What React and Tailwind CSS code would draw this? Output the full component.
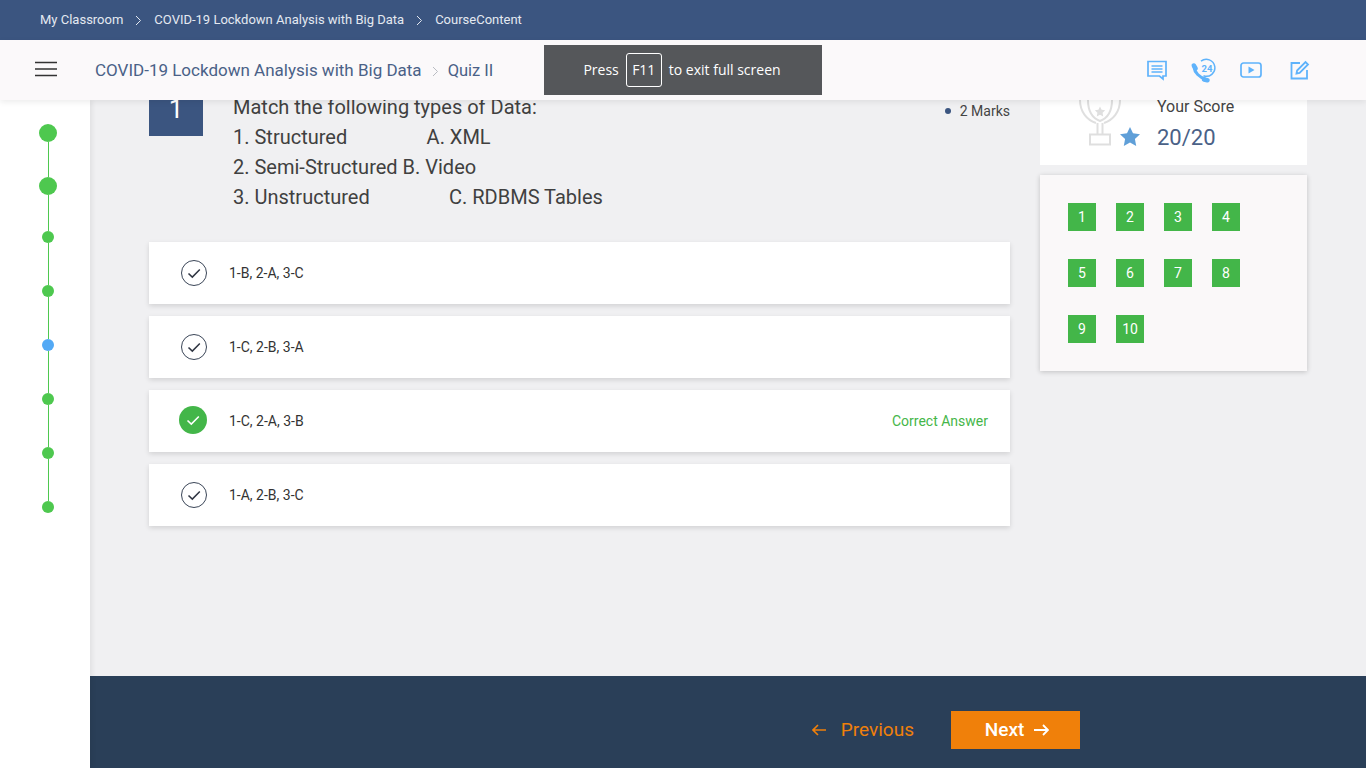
import React from "react";

const font = { fontFamily: "Roboto, sans-serif" };

function Dot({ big, blue }) {
  return (
    <div
      className={`shrink-0 rounded-full ${big ? "w-[18px] h-[18px]" : "w-3 h-3"} ${blue ? "bg-[#53a9f5]" : "bg-[#4ec84f]"}`}
    />
  );
}
function Seg({ h }) {
  return h === 35 ? (
    <div className="w-px h-[35px] bg-[#4ec84f]" />
  ) : h === 36 ? (
    <div className="w-px h-[36px] bg-[#4ec84f]" />
  ) : (
    <div className="w-px h-[42px] bg-[#4ec84f]" />
  );
}

function Check({ on }) {
  return on ? (
    <svg width="28" height="28" viewBox="0 0 28 28" className="shrink-0 -ml-[2px] -mt-[2px]">
      <circle cx="14" cy="14" r="14" fill="#43b649" />
      <path d="M8.5 14.5l3.8 3.6 7.5-7.6" fill="none" stroke="#fff" strokeWidth="1.6" />
    </svg>
  ) : (
    <svg width="26" height="26" viewBox="0 0 26 26" className="shrink-0">
      <circle cx="13" cy="13" r="12.5" fill="none" stroke="#3a4557" strokeWidth="1" />
      <path d="M7.5 13.5l3.8 3.6 7.5-7.6" fill="none" stroke="#2f3542" strokeWidth="1.5" />
    </svg>
  );
}

function Option({ text, correct }) {
  return (
    <div className="h-[62px] bg-white shadow-[0_2px_5px_rgba(0,0,0,0.13)] flex items-center pl-8 pr-[22px]">
      <div className="w-[26px] flex justify-center">
        <Check on={correct} />
      </div>
      <span className="ml-[22px] text-sm text-[#333]">{text}</span>
      {correct && <span className="ml-auto text-sm text-[#45b649]">Correct Answer</span>}
    </div>
  );
}

function Num({ n }) {
  return (
    <div className="w-7 h-7 bg-[#43b649] text-white text-sm font-normal flex items-center justify-center">{n}</div>
  );
}

const Chevron = ({ className }) => (
  <svg width="7" height="11" viewBox="0 0 7 11" className={className}>
    <path d="M1 1l4.5 4.5L1 10" fill="none" stroke="currentColor" strokeWidth="1" />
  </svg>
);

export default function App() {
  return (
    <div className="relative w-full h-screen overflow-hidden flex flex-col bg-white" style={font}>
      <div className="relative z-20 h-10 shrink-0 bg-[#3b5580] flex items-center pl-10 text-[13px] text-[#e4e9f1]">
        <span>My Classroom</span>
        <Chevron className="mx-3 text-[#e4e9f1]" />
        <span>COVID-19 Lockdown Analysis with Big Data</span>
        <Chevron className="mx-3 text-[#e4e9f1]" />
        <span>CourseContent</span>
      </div>

      <div className="relative z-20 h-[60px] shrink-0 bg-[#fbf9fa] shadow-[0_2px_6px_rgba(0,0,0,0.08)] flex items-center pl-[35px] pr-[56px]">
        <svg width="22" height="16" viewBox="0 0 22 16" stroke="#333" strokeWidth="1.5" className="shrink-0 -mt-[2px]">
          <path d="M0 1.5h22M0 8h22M0 14.5h22" />
        </svg>
        <span className="ml-[38px] pt-[2px] text-[17px] text-[#4a6187]">COVID-19 Lockdown Analysis with Big Data</span>
        <Chevron className="ml-[10px] mr-[9px] mt-[2px] text-[#b9bcc2]" />
        <span className="pt-[2px] text-[16.5px] text-[#4a6187]">Quiz II</span>

        <div className="ml-auto flex items-center text-[#5fb3fb]">
          <svg width="22" height="22" viewBox="0 0 22 22" fill="none" stroke="currentColor" strokeWidth="1.7" className="mr-[22px] -ml-[1px]">
            <path d="M2 2.5h18v14.5h-3v3l-3.5-3H2z" />
            <path d="M5.5 7h11M5.5 10h11M5.5 13h11" />
          </svg>
          <svg width="26" height="26" viewBox="0 0 26 26" className="mr-[24px]">
            <path d="M11 4.2A8.5 8.5 0 1 1 13.5 18.8" fill="none" stroke="currentColor" strokeWidth="1.5" />
            <path d="M4 10C4.5 15.5 9.5 20.5 15.5 22" fill="none" stroke="currentColor" strokeWidth="3" />
            <path d="M3.8 8.5L5.6 11.5M14 22.5L17.5 23.3" fill="none" stroke="currentColor" strokeWidth="4.5" strokeLinecap="round" />
            <text x="11.5" y="14.5" fontSize="9.5" fontWeight="700" fill="currentColor" fontFamily="Roboto, sans-serif">24</text>
          </svg>
          <svg width="22" height="16" viewBox="0 0 22 16" fill="none" className="mr-[28px]">
            <rect x="1" y="1" width="20" height="14" rx="2.5" stroke="currentColor" strokeWidth="1.7" />
            <path d="M8.5 4.5l6 3.5-6 3.5z" fill="currentColor" />
          </svg>
          <svg width="20" height="20" viewBox="0 0 20 20" fill="none" stroke="currentColor" strokeWidth="1.8">
            <path d="M10 3H1.5v15.5H17V10" />
            <path d="M6.5 13.5l.6-3L15.5 2l2.5 2.5-8.4 8.4z" />
          </svg>
        </div>
      </div>

      <div className="absolute z-30 left-[544px] top-[45px] w-[278px] h-[50px] pr-[2px] bg-[#55575a] flex items-center justify-center text-[14px] text-white" style={{ fontFamily: "'Open Sans', sans-serif" }}>
        <span className="-mt-[2px]">Press</span>
        <span className="ml-[7px] mr-[7px] w-9 h-[34px] border border-white rounded-[3px] flex items-center justify-center pb-[2px]">F11</span>
        <span className="-mt-[2px]">to exit full screen</span>
      </div>

      <div className="flex-1 min-h-0 flex">
        <aside className="relative z-10 w-[90px] shrink-0 bg-white pt-6 pl-[39px] shadow-[2px_0_5px_rgba(0,0,0,0.07)]">
          <div className="w-[18px] flex flex-col items-center">
            <Dot big />
            <Seg h={35} />
            <Dot big />
            <Seg h={36} />
            <Dot />
            <Seg />
            <Dot />
            <Seg />
            <Dot blue />
            <Seg />
            <Dot />
            <Seg />
            <Dot />
            <Seg />
            <Dot />
          </div>
        </aside>

        <div className="flex-1 min-w-0 flex flex-col">
          <main className="flex-1 min-h-0 overflow-hidden bg-[#f0f0f2] pl-[59px] flex items-start">
            <div className="w-[861px] shrink-0 -mt-[18px]">
              <div className="flex items-start h-[142px]">
                <div className="w-[54px] h-[54px] bg-[#3b5580] text-white text-[26px] flex items-end justify-center pb-[14px] leading-none">1</div>
                <div className="ml-[30px] pt-[10px] text-[20px] leading-[30px] text-[#404040] whitespace-pre">
                  <div>Match the following types of Data:</div>
                  <div>{"1. Structured                A. XML"}</div>
                  <div>2. Semi-Structured B. Video</div>
                  <div>{"3. Unstructured                C. RDBMS Tables"}</div>
                </div>
                <div className="ml-auto pt-[19px] flex items-center text-sm text-[#444]">
                  <span className="w-[6px] h-[6px] rounded-full bg-[#3b5580] mr-[9px]" />
                  2 Marks
                </div>
              </div>
              <div className="mt-[18px] flex flex-col gap-3">
                <Option text="1-B, 2-A, 3-C" />
                <Option text="1-C, 2-B, 3-A" />
                <Option text="1-C, 2-A, 3-B" correct />
                <Option text="1-A, 2-B, 3-C" />
              </div>
            </div>

            <div className="ml-[30px] w-[267px] shrink-0 -mt-[10px]">
              <div className="h-[75px] bg-white flex relative">
                <svg width="42" height="56" viewBox="0 0 42 56" fill="none" stroke="#dfdfdf" strokeWidth="2" className="absolute left-[39px] top-0">
                  <path d="M1 10C1 22 8 30 17 33M41 10C41 22 34 30 25 33" />
                  <path d="M9 10C9 20 13 28 21 31C29 28 33 20 33 10" />
                  <path d="M18.5 33V44M23.5 33V44" />
                  <rect x="11" y="44.5" width="20" height="10" />
                  <path d="M21 16.5l1.6 3.3 3.6.5-2.6 2.5.6 3.6-3.2-1.7-3.2 1.7.6-3.6-2.6-2.5 3.6-.5z" fill="#dfdfdf" stroke="none" />
                </svg>
                <svg width="20" height="19" viewBox="0 0 20 19" className="absolute left-[80px] top-[37px]">
                  <path d="M10 0l3 6.3 7 .9-5.1 4.8 1.3 6.9L10 15.6l-6.2 3.3 1.3-6.9L0 7.2l7-.9z" fill="#5f9fd8" />
                </svg>
                <div className="ml-[117px] pt-[7px]">
                  <div className="text-base leading-[20px] text-[#444]">Your Score</div>
                  <div className="mt-[5px] text-[22px] leading-[32px] text-[#4a6187]">20/20</div>
                </div>
              </div>
              <div className="mt-[10px] h-[196px] bg-[#faf8f9] shadow-[0_1px_5px_rgba(0,0,0,0.2)] pt-7 pl-7">
                <div className="grid grid-cols-[repeat(4,28px)] gap-x-5 gap-y-7">
                  {[1, 2, 3, 4, 5, 6, 7, 8, 9, 10].map((n) => (
                    <Num key={n} n={n} />
                  ))}
                </div>
              </div>
            </div>
          </main>

          <footer className="h-[92px] shrink-0 bg-[#2a3f58] flex items-start justify-end pr-[286px] pt-[35px]">
            <div className="h-[38px] flex items-center text-[#f0800a] text-[19px]">
              <svg width="14" height="12" viewBox="0 0 14 12" fill="none" stroke="currentColor" strokeWidth="1.6">
                <path d="M14 6H1M6 1L1 6l5 5" />
              </svg>
              <span className="ml-[15px]">Previous</span>
            </div>
            <div className="ml-[37px] w-[129px] h-[38px] pl-[3px] bg-[#f0800a] text-white text-[19px] font-medium flex items-center justify-center">
              Next
              <svg width="15" height="12" viewBox="0 0 15 12" fill="none" stroke="currentColor" strokeWidth="1.8" className="ml-[10px]">
                <path d="M0 6h14M9 1l5 5-5 5" />
              </svg>
            </div>
          </footer>
        </div>
      </div>
    </div>
  );
}
